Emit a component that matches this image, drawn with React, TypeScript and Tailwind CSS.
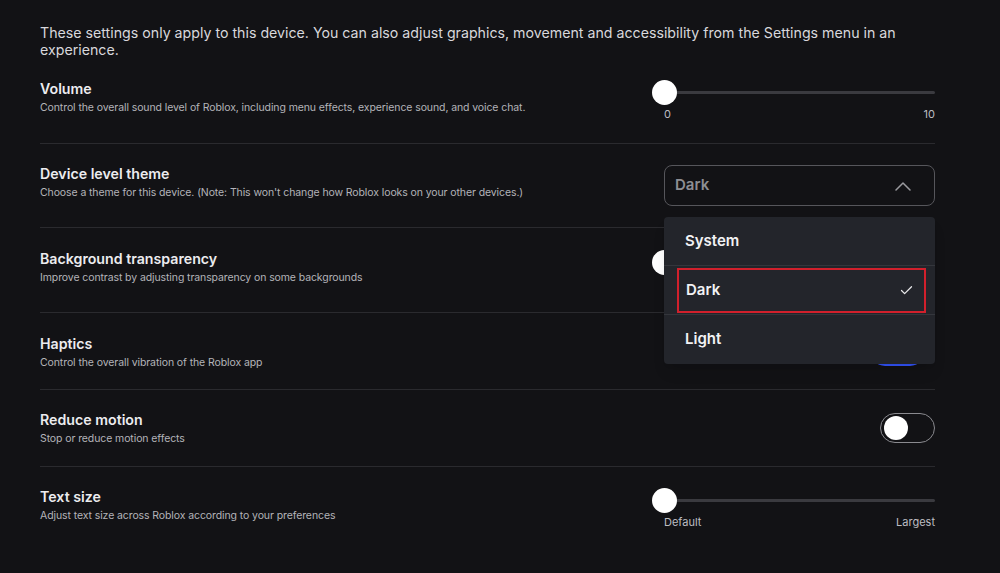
import { Check } from "lucide-react";

function Slider({ left, right, className = "" }: { left: string; right: string; className?: string }) {
  return (
    <div className={`w-[271px] flex flex-col ${className}`}>
      <div className="relative h-[3px] bg-[#3a3a3f] rounded-full">
        <div className="absolute left-[-12px] top-[-11px] w-[25px] h-[25px] rounded-full bg-white" />
      </div>
      <div className="flex justify-between mt-[15px] text-[11px] text-[#bdbdc2] leading-none">
        <span>{left}</span>
        <span>{right}</span>
      </div>
    </div>
  );
}

function Toggle({ on }: { on: boolean }) {
  return (
    <div
      className={`w-[55px] h-[30px] rounded-full flex items-center px-[3px] ${
        on ? "bg-[#3355ff] justify-end" : "border-[1.5px] border-[#8a8a8f] justify-start"
      }`}
    >
      <div className="w-[24px] h-[24px] rounded-full bg-white" />
    </div>
  );
}

function Row({
  title,
  desc,
  h,
  shift = "",
  last = false,
  children,
}: {
  title: string;
  desc: string;
  h: string;
  shift?: string;
  last?: boolean;
  children: React.ReactNode;
}) {
  return (
    <div className={`flex items-center justify-between ${last ? "" : "border-b border-[#2a2a2e]"} ${h}`}>
      <div className={`flex flex-col ${shift}`}>
        <span className="text-[14.2px] font-semibold text-[#ececef] leading-[19px]">{title}</span>
        <span className="text-[10.5px] tracking-[-0.1px] text-[#b4b4b9] leading-[15px] mt-[2px]">{desc}</span>
      </div>
      {children}
    </div>
  );
}

export default function App() {
  const options = ["System", "Dark", "Light"];
  return (
    <div
      className="w-[1000px] h-[573px] bg-[#121215] overflow-hidden px-[40px] pt-[24px]"
      style={{ fontFamily: "Inter, 'Noto Sans', sans-serif" }}
    >
      <div className="w-[895px]">
        <p className="text-[14.2px] leading-[17px] text-[#d8d8dc]">
          These settings only apply to this device. You can also adjust graphics, movement and accessibility from the Settings menu in an experience.
        </p>

        <Row
          title="Volume"
          desc="Control the overall sound level of Roblox, including menu effects, experience sound, and voice chat."
          h="h-[86px]"
          shift="mb-[8px]"
        >
          <Slider left="0" right="10" className="mt-[10px]" />
        </Row>

        <Row
          title="Device level theme"
          desc="Choose a theme for this device. (Note: This won't change how Roblox looks on your other devices.)"
          h="h-[84px]"
          shift="mb-[8px]"
        >
          <div className="relative w-[271px]">
            <div className="h-[41px] rounded-[8px] border border-[#56565b] flex items-center justify-between pl-[10px] pr-[23px]">
              <span className="text-[15px] font-semibold text-[#8e8e93]">Dark</span>
              <svg width="16" height="10" viewBox="0 0 16 10" fill="none">
                <polyline points="1,9 8,2 15,9" stroke="#9a9a9f" strokeWidth="1.5" strokeLinecap="round" strokeLinejoin="round" />
              </svg>
            </div>
            <div className="absolute left-0 top-[52px] w-full z-10 bg-[#23252b] rounded-[4px] shadow-lg flex flex-col">
              {options.map((o, i) => (
                <div
                  key={o}
                  className={`h-[49px] flex items-center ${i < options.length - 1 ? "border-b border-[#34363c]" : ""}`}
                >
                  {o === "Dark" ? (
                    <div className="ml-[13px] mr-[9px] flex-1 h-[45px] border-2 border-[#d1202c] flex items-center justify-between pl-[7px] pr-[10px]">
                      <span className="text-[15px] font-semibold text-[#f2f2f4]">{o}</span>
                      <Check size={15} strokeWidth={2} className="text-[#e8e8ea]" />
                    </div>
                  ) : (
                    <span className="pl-[21px] text-[15px] font-semibold text-[#f2f2f4]">{o}</span>
                  )}
                </div>
              ))}
            </div>
          </div>
        </Row>

        <Row
          title="Background transparency"
          desc="Improve contrast by adjusting transparency on some backgrounds"
          h="h-[85px]"
          shift="mb-[6px]"
        >
          <Slider left="" right="" />
        </Row>

        <Row title="Haptics" desc="Control the overall vibration of the Roblox app" h="h-[77px]" shift="mt-[2px]">
          <div className="pr-[10px]">
            <Toggle on />
          </div>
        </Row>

        <Row title="Reduce motion" desc="Stop or reduce motion effects" h="h-[77px]">
          <Toggle on={false} />
        </Row>

        <Row
          title="Text size"
          desc="Adjust text size across Roblox according to your preferences"
          h="h-[77px]"
          shift="mb-[2px]"
          last
        >
          <Slider left="Default" right="Largest" className="mt-[16px]" />
        </Row>
      </div>
    </div>
  );
}
